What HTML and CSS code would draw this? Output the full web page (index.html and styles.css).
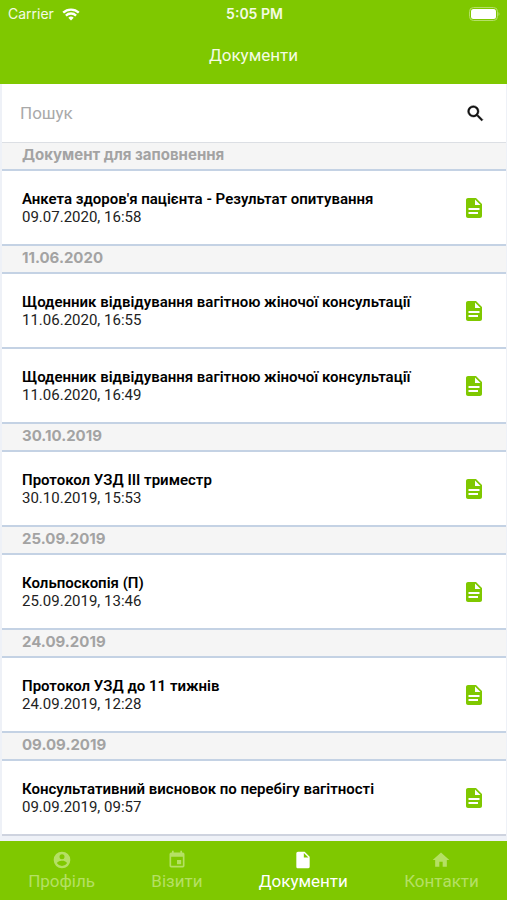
FILE: index.html
```html
<!DOCTYPE html>
<html lang="uk">
<head>
<meta charset="utf-8">
<meta name="viewport" content="width=device-width, initial-scale=1">
<title>Документи</title>
<link rel="stylesheet" href="styles.css">
</head>
<body>
<svg class="defs" aria-hidden="true">
  <symbol id="doc" viewBox="0 0 24 24"><path d="M14 2H6C4.900 2 4 2.900 4 4v16c0 1.100.900 2 2 2h12c1.100 0 2-.900 2-2V8l-6-6zm2 16H6.500v-2H16v2zm1.500-4h-11v-2h11v2zM13 9V3.500L18.500 9H13z"/></symbol>
</svg>
<header class="top">
  <div class="status">
    <div class="carrier"><span>Carrier</span>
      <svg class="wifi" viewBox="0 0 18 13" aria-hidden="true"><path class="dot" d="M9 12.500 6.300 9.800a3.900 3.900 0 0 1 5.400 0z"/><path d="M1.200 4.700a11.200 11.200 0 0 1 15.600 0M3.900 7.600a7.300 7.300 0 0 1 10.200 0"/></svg>
    </div>
    <span class="time">5:05 PM</span>
    <svg class="battery" viewBox="0 0 32 14" aria-hidden="true"><rect class="shell" x=".5" y=".5" width="28" height="13" rx="4"/><rect class="charge" x="2" y="2" width="25" height="10" rx="2.500"/><path class="cap" d="M29.500 5q2 2 0 4z"/></svg>
  </div>
  <h1>Документи</h1>
</header>
<main>
  <form class="search">
    <input type="text" placeholder="Пошук" aria-label="Пошук">
    <button type="button" aria-label="Шукати"><svg viewBox="0 0 24 24" aria-hidden="true"><path d="M15.500 14h-.790l-.280-.270A6.470 6.470 0 0 0 16 9.500 6.500 6.500 0 1 0 9.500 16c1.610 0 3.090-.590 4.230-1.570l.270.280v.790l5 4.990L20.490 19l-4.990-5zm-6 0C7.010 14 5 11.990 5 9.500S7.010 5 9.500 5 14 7.010 14 9.500 11.990 14 9.500 14z"/></svg></button>
  </form>
  <section>
    <h2>Документ для заповнення</h2>
    <a class="row" href="#"><span><b>Анкета здоров'я пацієнта - Результат опитування</b><time>09.07.2020, 16:58</time></span><svg><use href="#doc"/></svg></a>
  </section>
  <section>
    <h2>11.06.2020</h2>
    <a class="row" href="#"><span><b>Щоденник відвідування вагітною жіночої консультації</b><time>11.06.2020, 16:55</time></span><svg><use href="#doc"/></svg></a>
    <a class="row" href="#"><span><b>Щоденник відвідування вагітною жіночої консультації</b><time>11.06.2020, 16:49</time></span><svg><use href="#doc"/></svg></a>
  </section>
  <section>
    <h2>30.10.2019</h2>
    <a class="row" href="#"><span><b>Протокол УЗД III триместр</b><time>30.10.2019, 15:53</time></span><svg><use href="#doc"/></svg></a>
  </section>
  <section>
    <h2>25.09.2019</h2>
    <a class="row" href="#"><span><b>Кольпоскопія (П)</b><time>25.09.2019, 13:46</time></span><svg><use href="#doc"/></svg></a>
  </section>
  <section>
    <h2>24.09.2019</h2>
    <a class="row" href="#"><span><b>Протокол УЗД до 11 тижнів</b><time>24.09.2019, 12:28</time></span><svg><use href="#doc"/></svg></a>
  </section>
  <section>
    <h2>09.09.2019</h2>
    <a class="row" href="#"><span><b>Консультативний висновок по перебігу вагітності</b><time>09.09.2019, 09:57</time></span><svg><use href="#doc"/></svg></a>
  </section>
</main>
<nav class="tabs">
  <a href="#"><svg viewBox="0 0 24 24" aria-hidden="true"><path d="M12 2a10 10 0 1 0 0 20 10 10 0 0 0 0-20zm0 3a3 3 0 1 1 0 6 3 3 0 0 1 0-6zm0 14.200a7.200 7.200 0 0 1-6-3.220c.030-1.990 4-3.080 6-3.080s5.970 1.090 6 3.080a7.200 7.200 0 0 1-6 3.220z"/></svg>Профіль</a>
  <a href="#"><svg viewBox="0 0 24 24" aria-hidden="true"><path d="M17 12h-5v5h5v-5zM16 1v2H8V1H6v2H5a2 2 0 0 0-2 2v14c0 1.100.890 2 2 2h14a2 2 0 0 0 2-2V5a2 2 0 0 0-2-2h-1V1h-2zm3 18H5V8h14v11z"/></svg>Візити</a>
  <a class="active" href="#" aria-current="page"><svg viewBox="0 0 24 24" aria-hidden="true"><path d="M6 2a2 2 0 0 0-2 2v16c0 1.100.890 2 2 2h12a2 2 0 0 0 2-2V8l-6-6H6zm7 7V3.500L18.500 9H13z"/></svg>Документи</a>
  <a href="#"><svg viewBox="0 0 24 24" aria-hidden="true"><path d="M10 20v-6h4v6h5v-8h3L12 3 2 12h3v8z"/></svg>Контакти</a>
</nav>
</body>
</html>
```
FILE: styles.css
```css
* { box-sizing: border-box; }
body {
  margin: 0;
  min-height: 100vh;
  display: flex;
  flex-direction: column;
  background: #eef1f7;
  font-family: Roboto, "Noto Sans", sans-serif;
}
.defs { position: absolute; width: 0; height: 0; }
.top { background: #7fc800; color: #f4fbe4; padding-bottom: 18px; }
.status {
  display: grid;
  grid-template-columns: 1fr auto 1fr;
  align-items: center;
  height: 28px;
  padding: 0 6px 0 8px;
  font: 14px/28px Inter, sans-serif;
}
.carrier { display: flex; align-items: center; gap: 8px; }
.wifi { width: 18px; height: 13px; fill: none; stroke: #fff; stroke-width: 2.3; }
.wifi .dot { fill: #fff; stroke: none; }
.time { font-weight: 600; }
.battery { width: 32px; height: 14px; justify-self: end; }
.shell { fill: none; stroke: #b5df68; }
.charge { fill: #fff; }
.cap { fill: #b5df68; }
h1 { margin: 16px 0 0; font-size: 17px; line-height: 22px; font-weight: 400; text-align: center; }
main { flex: 1; padding: 0 1px 0 2px; }
.search { display: flex; align-items: center; height: 58px; padding: 0 20px 0 18px; background: #fff; }
.search input { flex: 1; min-width: 0; border: 0; padding: 0; outline: 0; background: none; font: 17px/24px Roboto, sans-serif; }
.search input::placeholder { color: #a9a9a9; opacity: 1; }
.search button { display: flex; border: 0; padding: 0; background: none; }
.search svg { width: 21px; height: 21px; fill: #111; stroke: #111; stroke-width: .5; }
h2 {
  margin: 0;
  height: 28px;
  padding-left: 20px;
  border-top: 2px solid #c4d2e4;
  background: #f5f5f5;
  color: #a3a3a3;
  font: 700 15px/24px Inter, "Noto Sans", sans-serif;
}
.search + section h2 { height: 27px; border-top: 1px solid #dcdfe4; }
.row {
  display: flex;
  align-items: center;
  justify-content: space-between;
  height: 75px;
  padding: 0 20px;
  border-top: 2px solid #c4d2e4;
  background: #fff;
  color: #222;
  font-size: 15px;
  line-height: 18px;
  text-decoration: none;
}
.row b { display: block; color: #000; font-weight: 600; }
.row time { display: block; }
.row svg { width: 24px; height: 24px; fill: #7fc800; }
section:last-child { border-bottom: 2px solid #ced3df; }
.tabs { display: flex; justify-content: space-around; height: 59px; padding-top: 9px; background: #7fc800; }
.tabs a { display: flex; flex-direction: column; align-items: center; color: #b5e064; font-size: 17px; line-height: 22px; text-decoration: none; }
.tabs svg { width: 20px; height: 20px; fill: currentColor; }
.tabs .active { color: #fff; }
```
